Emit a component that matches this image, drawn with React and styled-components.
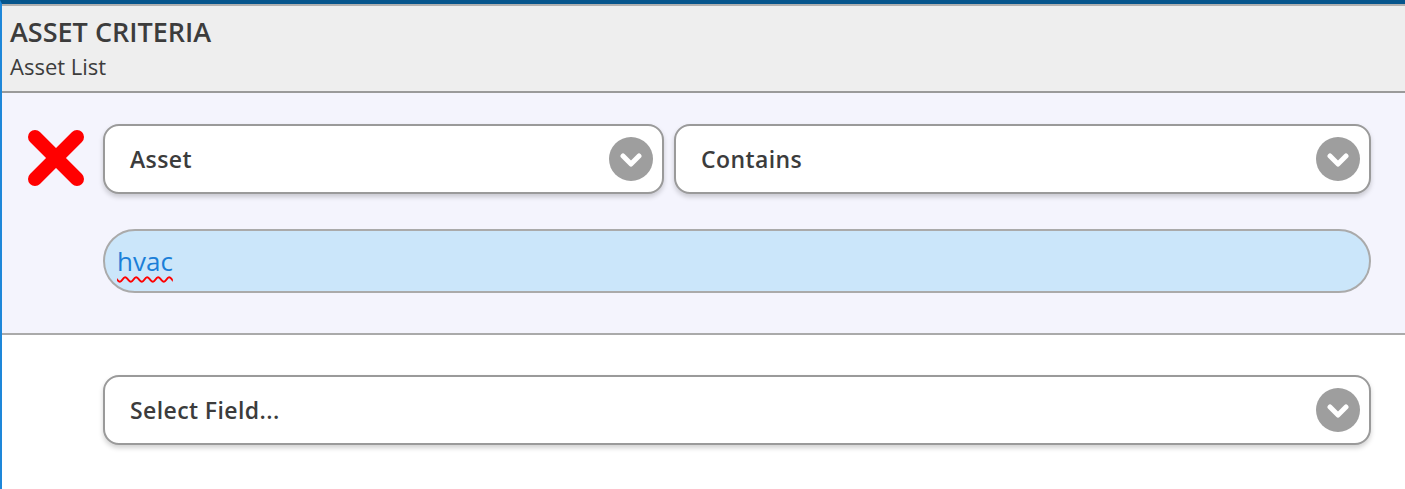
import React from "react";
import styled, { createGlobalStyle } from "styled-components";

const GlobalStyle = createGlobalStyle`
  html, body {
    margin: 0;
    padding: 0;
    background: #ffffff;
  }
  body {
    font-family: "Open Sans", "Liberation Sans", sans-serif;
    color: #3f3f3f;
  }
`;

function Chevron() {
  return (
    <ChevronCircle>
      <svg width="22" height="14" viewBox="0 0 22 14">
        <polyline
          points="3,3 11,11 19,3"
          fill="none"
          stroke="#ffffff"
          strokeWidth="5"
          strokeLinecap="round"
          strokeLinejoin="round"
        />
      </svg>
    </ChevronCircle>
  );
}

function RemoveIcon() {
  return (
    <svg width="58" height="58" viewBox="0 0 58 58">
      <line x1="8" y1="8" x2="50" y2="50" stroke="#ff0000" strokeWidth="14" strokeLinecap="round" />
      <line x1="50" y1="8" x2="8" y2="50" stroke="#ff0000" strokeWidth="14" strokeLinecap="round" />
    </svg>
  );
}

function Select({ label, width }) {
  return (
    <SelectBox $width={width}>
      <SelectLabel>{label}</SelectLabel>
      <Chevron />
    </SelectBox>
  );
}

export default function App() {
  return (
    <>
      <GlobalStyle />
      <Page>
        <Header>
          <Title>ASSET CRITERIA</Title>
          <Subtitle>Asset List</Subtitle>
        </Header>
        <CriteriaRow>
          <RemoveButton>
            <RemoveIcon />
          </RemoveButton>
          <Fields>
            <SelectLine>
              <Select label="Asset" width="561px" />
              <Select label="Contains" />
            </SelectLine>
            <ValueInput>
              <ValueText>hvac</ValueText>
            </ValueInput>
          </Fields>
        </CriteriaRow>
        <NewRow>
          <Select label="Select Field..." />
        </NewRow>
      </Page>
    </>
  );
}

const Page = styled.div`
  min-height: 100vh;
  box-sizing: border-box;
  border-left: 2px solid #1e87d9;
  border-top: 4px solid #06558c;
`;

const Header = styled.div`
  background: #eeeeee;
  border-top: 2px solid #b0b0b0;
  border-bottom: 2px solid #9a9a9a;
  padding: 11px 8px 11px;
`;

const Title = styled.div`
  font-size: 27px;
  font-weight: 600;
  line-height: 30px;
  margin-bottom: 5px;
  color: #3c3c3c;
`;

const Subtitle = styled.div`
  font-size: 22px;
  line-height: 28px;
  color: #3c3c3c;
`;

const CriteriaRow = styled.div`
  display: flex;
  align-items: flex-start;
  background: #f4f4fd;
  border-bottom: 2px solid #aaaaaa;
  padding: 31px 34px 40px 0;
`;

const RemoveButton = styled.div`
  width: 101px;
  display: flex;
  justify-content: flex-end;
  padding: 5px 18px 0 0;
  box-sizing: border-box;
`;

const Fields = styled.div`
  flex: 1;
  display: flex;
  flex-direction: column;
  gap: 35px;
`;

const SelectLine = styled.div`
  display: flex;
  gap: 10px;
`;

const SelectBox = styled.div`
  box-sizing: border-box;
  height: 70px;
  ${(p) => (p.$width ? `width: ${p.$width};` : "flex: 1;")}
  display: flex;
  align-items: center;
  justify-content: space-between;
  background: #ffffff;
  border: 2px solid #9a9a9a;
  border-radius: 16px;
  box-shadow: 0 3px 5px rgba(0, 0, 0, 0.18);
  padding: 0 9px 0 25px;
`;

const SelectLabel = styled.span`
  font-size: 23px;
  font-weight: 600;
  letter-spacing: 0.4px;
  color: #3c3c3c;
`;

const ChevronCircle = styled.span`
  width: 44px;
  height: 44px;
  border-radius: 50%;
  background: #9e9e9e;
  display: flex;
  align-items: center;
  justify-content: center;
  padding-top: 2px;
  box-sizing: border-box;
`;

const ValueInput = styled.div`
  box-sizing: border-box;
  height: 64px;
  display: flex;
  align-items: center;
  background: #cbe6fa;
  border: 2px solid #aaaaaa;
  border-radius: 32px;
  padding: 0 12px;
`;

const ValueText = styled.span`
  font-size: 26px;
  color: #1b7fd8;
  text-decoration: underline wavy #ff0000;
  text-decoration-thickness: 1.5px;
  text-underline-offset: 5px;
`;

const NewRow = styled.div`
  padding: 40px 34px 0 101px;
`;
